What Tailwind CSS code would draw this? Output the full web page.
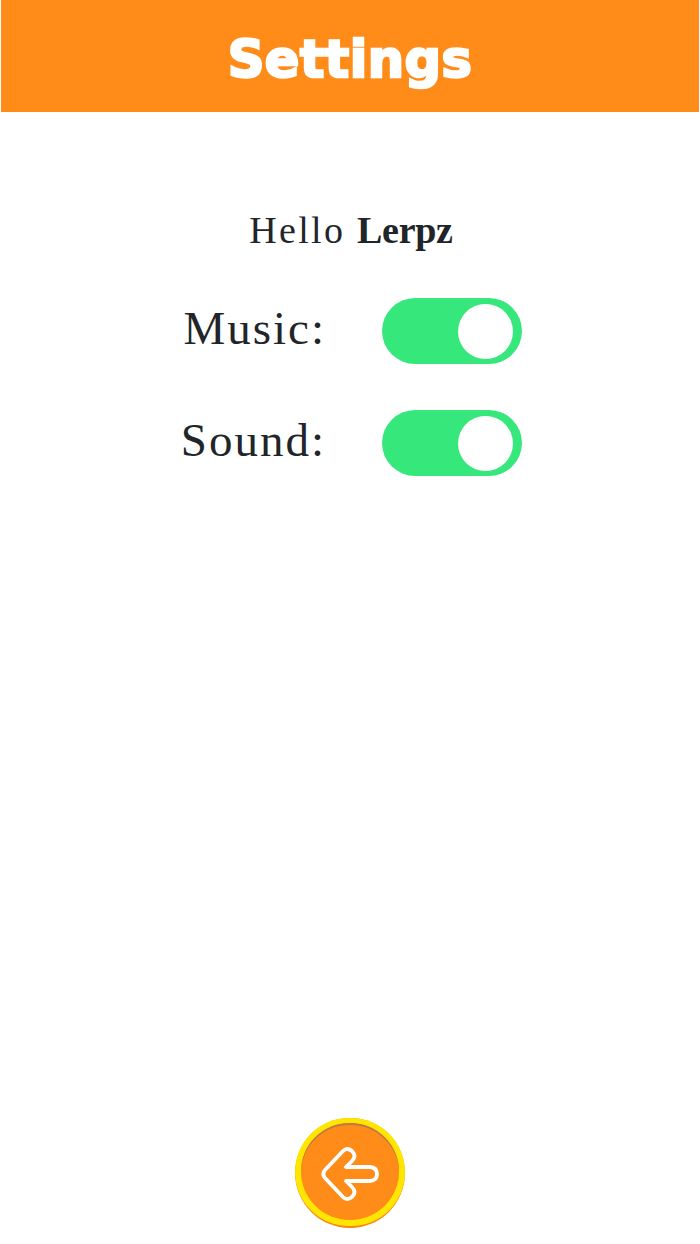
<!DOCTYPE html>
<html lang="en">

<head>
  <meta charset="UTF-8" />
  <meta name="viewport" content="width=device-width, initial-scale=1.0" />
  <title>Settings</title>
  <script src="https://cdn.jsdelivr.net/npm/@tailwindcss/browser@4"></script>
</head>

<body class="bg-white">
  <div class="h-[1244px] flex flex-col items-center">
    <!-- Header -->
    <header class="w-full h-[112px] px-px">
      <div class="h-full bg-[#ff8b19] flex items-center justify-center pt-[6px]">
        <h1 class="font-['DejaVu_Sans',sans-serif] font-bold text-[51px] leading-none tracking-[0.5px] text-white [-webkit-text-stroke:2.5px_white]">Settings</h1>
      </div>
    </header>

    <!-- Greeting -->
    <p class="mt-[94px] h-[48px] leading-[48px] font-['Liberation_Serif',serif] text-[38px] text-[#212529] tracking-[2.3px] pl-[2px]">Hello <b class="tracking-[-0.3px]">Lerpz</b></p>

    <!-- Toggles -->
    <div class="mt-[44px] mr-[4px] flex flex-col gap-[46px]">
      <div class="flex items-center gap-[56px] h-[66px]">
        <span class="w-[152px] text-right font-['Liberation_Serif',serif] text-[47px] leading-none text-[#212529] tracking-[2px] -mt-[6px]">Music:</span>
        <div class="w-[140px] h-[66px] rounded-full bg-[#36e87c] flex items-center justify-end pr-[9px]">
          <div class="w-[55px] h-[55px] rounded-full bg-white"></div>
        </div>
      </div>
      <div class="flex items-center gap-[56px] h-[66px]">
        <span class="w-[152px] text-right font-['Liberation_Serif',serif] text-[47px] leading-none text-[#212529] tracking-[2px] -mt-[6px]">Sound:</span>
        <div class="w-[140px] h-[66px] rounded-full bg-[#36e87c] flex items-center justify-end pr-[9px]">
          <div class="w-[55px] h-[55px] rounded-full bg-white"></div>
        </div>
      </div>
    </div>

    <!-- Back button -->
    <button class="mt-auto mb-[16px] w-[110px] h-[110px] rounded-full bg-[#f98512] flex items-start justify-center">
      <span class="w-[110px] h-[108px] rounded-full bg-[#ffe600] flex items-start justify-center pt-[5px]">
        <span class="w-[98px] h-[97px] rounded-full bg-[#ff8b19] shadow-[inset_0_2px_0_#c07a45] flex items-center justify-center">
          <svg class="mt-[4px]" width="58" height="58" viewBox="0 0 58 58" fill="none" stroke="white" stroke-width="3.8" stroke-linejoin="round">
            <path d="M4 25 L22 6 Q26 2 31 6 Q36 11 31 16 L25 22 L49 22 Q56 22.500 56 29 Q56 35.500 49 36 L25 36 L31 42 Q36 47 31 52 Q26 56 22 52 L4 33 Q0.500 29 4 25 Z" />
          </svg>
        </span>
      </span>
    </button>
  </div>
</body>

</html>
